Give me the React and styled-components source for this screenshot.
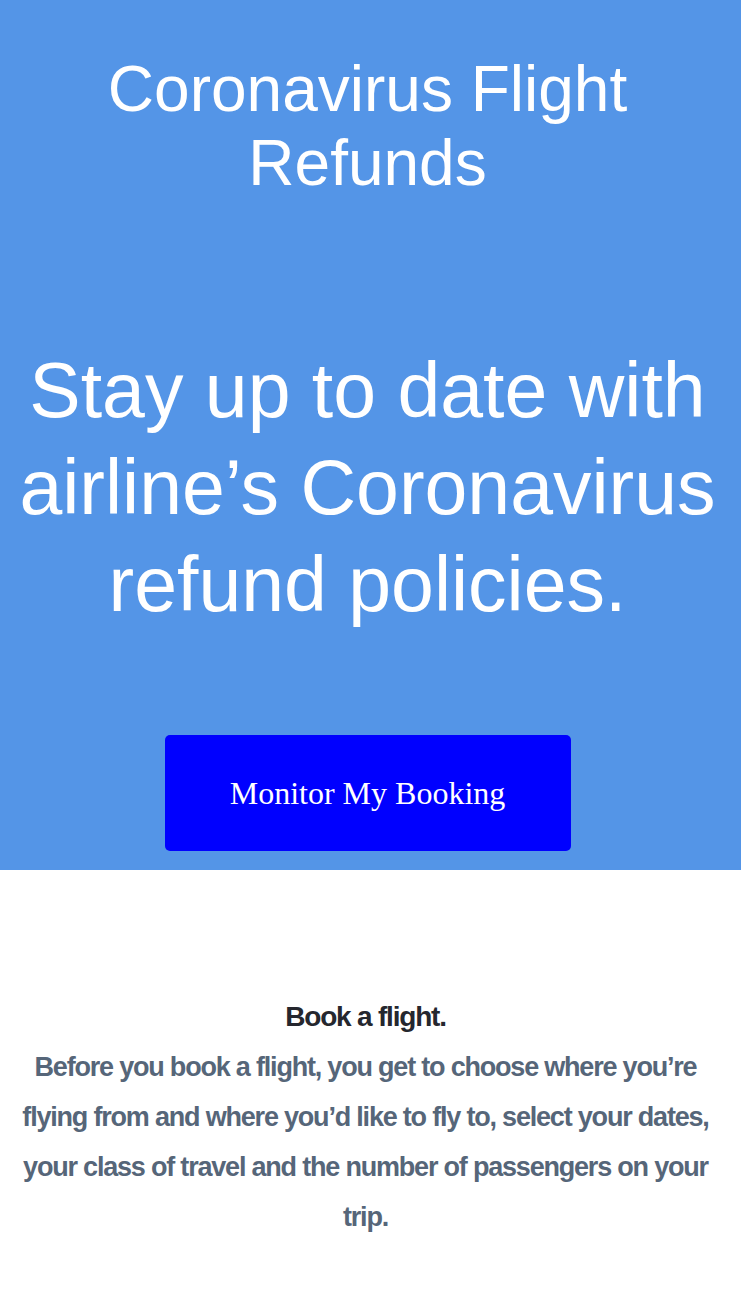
import React from 'react';
import styled, { createGlobalStyle } from 'styled-components';

const GlobalStyle = createGlobalStyle`
  body {
    margin: 0;
    background: #ffffff;
  }
`;

const App = () => {
  return (
    <>
      <GlobalStyle />
      <Hero>
        <Title>Coronavirus Flight Refunds</Title>
        <Tagline>Stay up to date with airline’s Coronavirus refund policies.</Tagline>
        <MonitorButton type="button">Monitor My Booking</MonitorButton>
      </Hero>
      <InfoSection>
        <InfoHeading>Book a flight.</InfoHeading>
        <InfoText>
          Before you book a flight, you get to choose where you’re flying from and where
          you’d like to fly to, select your dates, your class of travel and the number of
          passengers on your trip.
        </InfoText>
      </InfoSection>
    </>
  );
};

export default App;

const Hero = styled.header`
  display: flex;
  flex-direction: column;
  align-items: center;
  padding: 52px 16px 19px 10px;
  background: #5495e7;
  text-align: center;
`;

const Title = styled.h1`
  margin: 0;
  width: 560px;
  font-family: 'Liberation Sans', Arial, sans-serif;
  font-weight: 400;
  font-size: 64px;
  line-height: 74px;
  color: #ffffff;
`;

const Tagline = styled.p`
  margin: 142px 0 0;
  font-family: 'Liberation Sans', Arial, sans-serif;
  font-size: 77px;
  line-height: 97px;
  color: #ffffff;
`;

const MonitorButton = styled.button`
  margin-top: 102px;
  width: 406px;
  height: 116px;
  border: none;
  border-radius: 5px;
  background: #0000ff;
  color: #ffffff;
  font-family: 'Liberation Serif', 'Times New Roman', serif;
  font-size: 32px;
  cursor: pointer;
`;

const InfoSection = styled.section`
  padding: 122px 22px 73px 12px;
  text-align: center;
  font-family: 'Liberation Sans', Arial, sans-serif;
  font-weight: 700;
  font-size: 27px;
  letter-spacing: -1.2px;
  line-height: 50px;
`;

const InfoHeading = styled.h2`
  margin: 0;
  font-size: 28px;
  line-height: inherit;
  color: #25272e;
`;

const InfoText = styled.p`
  margin: 0;
  color: #566679;
`;
